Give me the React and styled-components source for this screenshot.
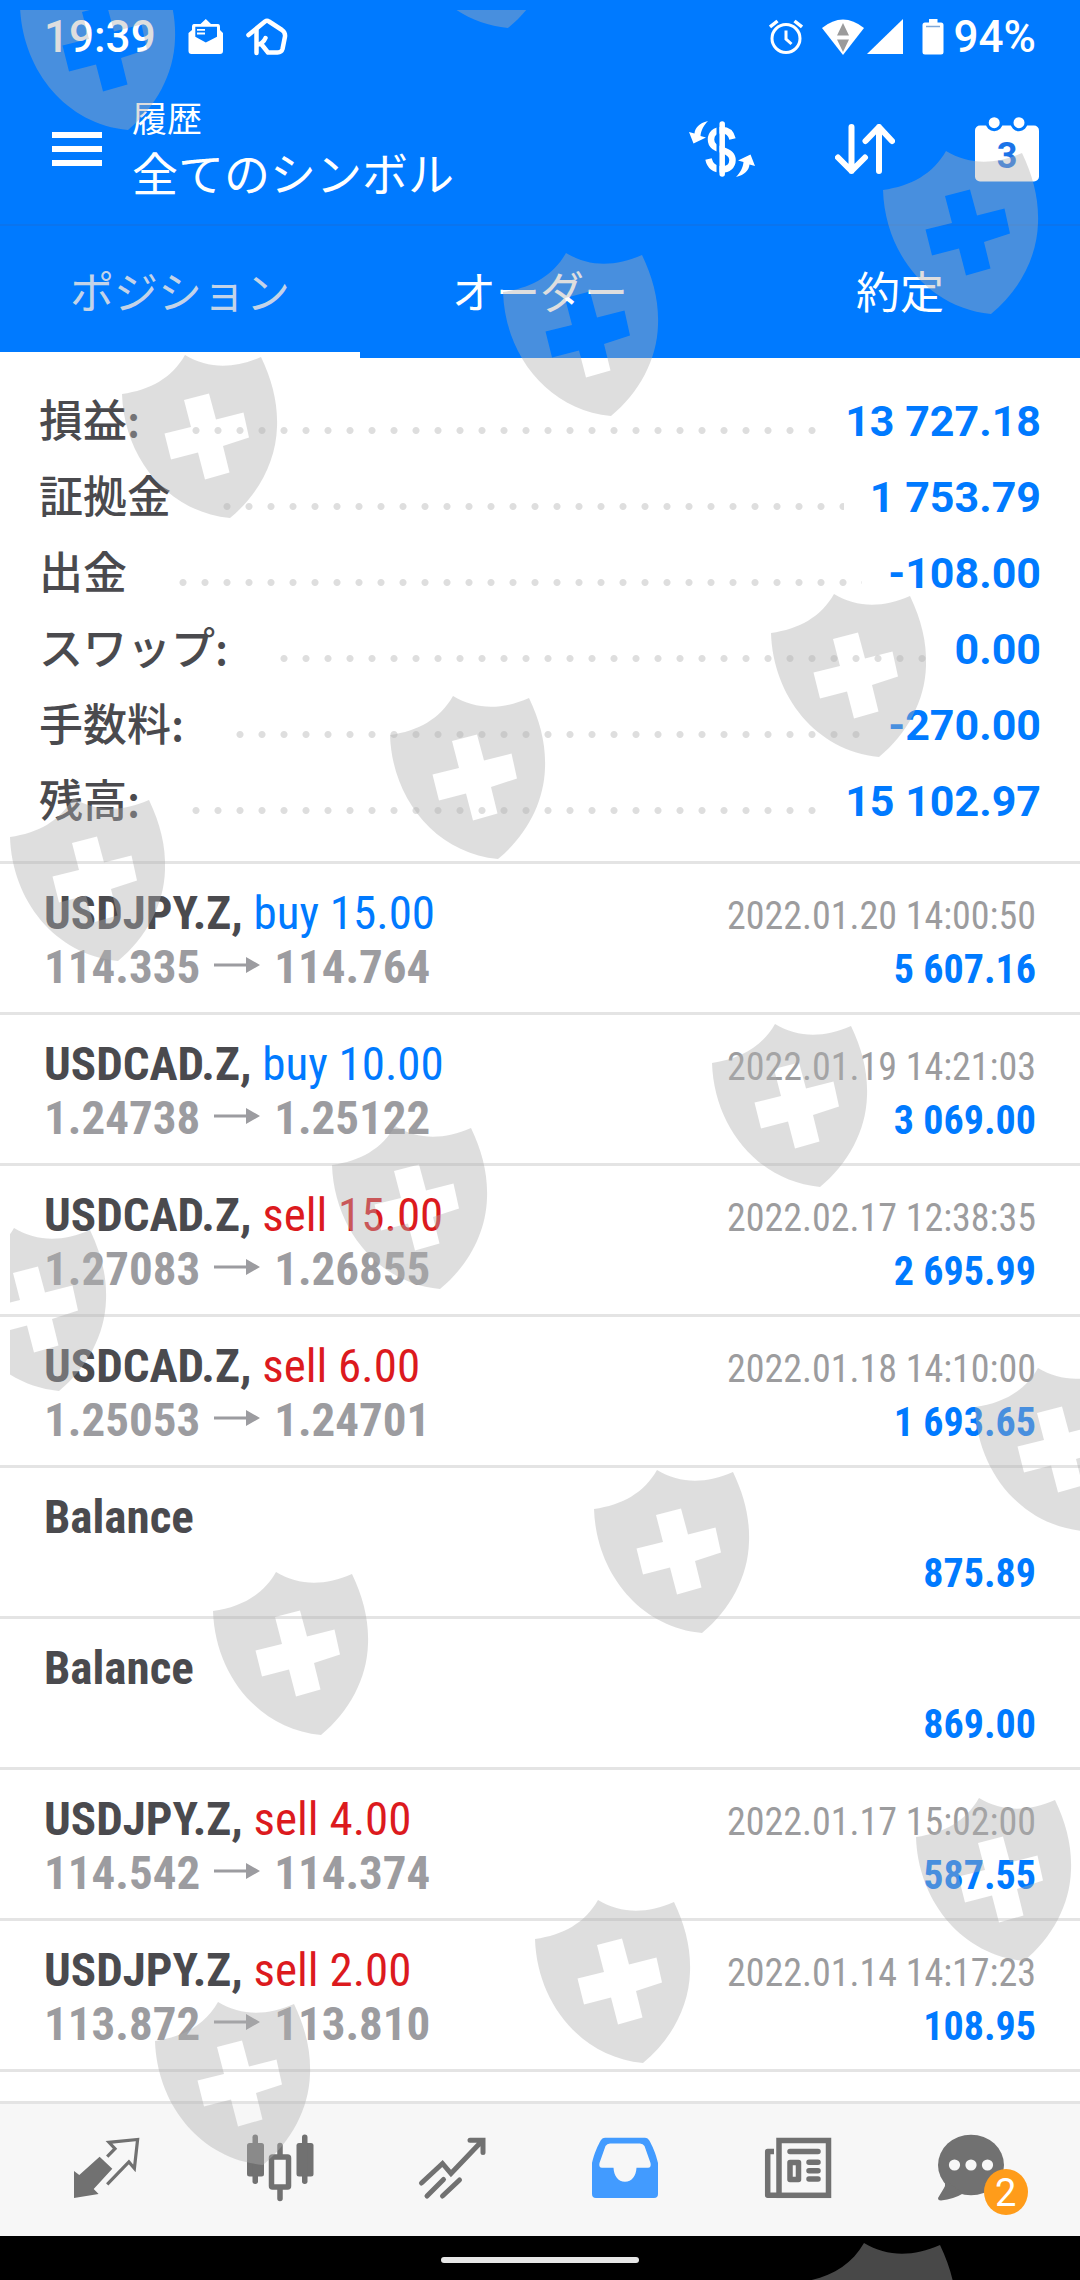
import React from "react";
import styled, { createGlobalStyle } from "styled-components";

const BLUE = "#007aff";
const JP = '"Noto Sans CJK JP", "Noto Sans", sans-serif';
const LATIN = 'Roboto, "Noto Sans CJK JP", sans-serif';
const NARROW = '"Roboto Condensed", Roboto, sans-serif';

const GlobalStyle = createGlobalStyle`
  * { box-sizing: border-box; }
  body { margin: 0; background: #fff; }
  button { border: 0; padding: 0; margin: 0; background: none; font: inherit; color: inherit; cursor: pointer; }
  svg { display: block; flex: none; }
`;

const Screen = styled.div`
  position: relative;
  display: flex;
  flex-direction: column;
  height: 100vh;
  overflow: hidden;
  font-family: ${LATIN};
  background: #fff;
`;

/* ---------- header ---------- */

const Header = styled.header`
  flex: none;
  background: ${BLUE};
  color: #fff;
`;

const StatusBar = styled.div`
  display: flex;
  align-items: center;
  justify-content: space-between;
  height: 74px;
  padding: 0 44px;
  font-size: 44px;
  font-weight: 500;
  line-height: 74px;
`;

const StatusGroup = styled.div`
  display: flex;
  align-items: center;
  gap: ${(p) => p.$gap}px;
`;

const Toolbar = styled.div`
  display: flex;
  align-items: center;
  height: 152px;
  padding: 0 41px 0 52px;
  border-bottom: 2px solid #0a74ee;
`;

const MenuButton = styled.button`
  display: flex;
  flex-direction: column;
  gap: 8px;
  width: 50px;
  margin-right: 30px;
`;

const MenuBar = styled.span`
  height: 6px;
  background: #fff;
`;

const Titles = styled.div`
  flex: 1;
  padding-bottom: 8px;
  font-family: ${JP};
`;

const Caption = styled.div`
  font-size: 35px;
  line-height: 52px;
`;

const Title = styled.h1`
  margin: 0;
  font-size: 46px;
  font-weight: 400;
  line-height: 56px;
`;

const Actions = styled.div`
  display: flex;
  align-items: center;
  gap: 80px;
`;

const Tabs = styled.div`
  display: flex;
  height: 132px;
`;

const Tab = styled.button`
  && {
    flex: 1;
    padding-top: 2px;
    border-bottom: 6px solid ${(p) => (p.$active ? "#fff" : BLUE)};
    font-family: ${JP};
    font-size: 44px;
    color: ${(p) => (p.$active ? "#c3d3e8" : "#fff")};
  }
`;

/* ---------- summary ---------- */

const Summary = styled.dl`
  flex: none;
  margin: 0;
  padding: 24px 39px 23px;
  border-bottom: 3px solid #e4e4e4;
`;

const SummaryRow = styled.div`
  display: flex;
  height: 76px;
  line-height: 78px;
  font-size: 44px;
`;

const SummaryLabel = styled.dt`
  font-family: ${JP};
  font-weight: 500;
  color: #4a4a4e;
  line-height: 72px;
`;

const Leader = styled.span`
  flex: 1;
  height: 7px;
  margin: 45px 26px 0 41px;
  background: radial-gradient(circle at 15px 50%, #dedede 3px, transparent 4px) 0 0 / 22px 7px repeat-x;
`;

const SummaryValue = styled.dd`
  margin: 0;
  font-size: 43px;
  font-weight: 700;
  color: ${BLUE};
`;

/* ---------- deals ---------- */

const DealList = styled.ul`
  flex: 1;
  min-height: 0;
  margin: 0;
  padding: 0;
  overflow: hidden;
  list-style: none;
  font-family: ${NARROW};
`;

const Deal = styled.li`
  height: 151px;
  padding: 22px 44px 0;
  border-bottom: 3px solid #e4e4e4;
`;

const Line = styled.div`
  display: flex;
  align-items: baseline;
  justify-content: space-between;
  height: 54px;
  font-size: 47px;
  line-height: 54px;
  white-space: pre;
`;

const Symbol = styled.span`
  font-weight: 700;
  color: #4a4a4e;
`;

const Side = styled.span`
  font-weight: 400;
  color: ${(p) => (p.$side === "sell" ? "#dc1a1e" : BLUE)};
`;

const Prices = styled.span`
  font-weight: 700;
  color: #9c9ca0;

  svg {
    display: inline-block;
    margin: 0 14px 9px;
  }
`;

const Time = styled.time`
  font-size: 38px;
  color: #9c9c9e;
`;

const Profit = styled.span`
  font-size: 40px;
  font-weight: 700;
  color: ${BLUE};
`;

/* ---------- bottom ---------- */

const BottomNav = styled.nav`
  display: flex;
  flex: none;
  height: 135px;
  padding: 0 23px 0 21px;
  border-top: 3px solid #e4e4e4;
  background: #f7f7f7;
`;

const NavButton = styled.button`
  && {
    display: flex;
    flex: 1;
    align-items: center;
    justify-content: center;
    color: ${(p) => (p.$active ? "#429bff" : "#717171")};
  }
`;

const BadgeAnchor = styled.span`
  position: relative;
`;

const Badge = styled.span`
  position: absolute;
  right: -17px;
  bottom: -5px;
  width: 44px;
  height: 46px;
  border-radius: 50%;
  background: #ff9c1a;
  color: #fff;
  font-size: 38px;
  line-height: 48px;
  text-align: center;
`;

const GestureBar = styled.div`
  display: flex;
  flex: none;
  justify-content: center;
  height: 44px;
  padding-top: 21px;
  background: #000;
`;

const GesturePill = styled.span`
  width: 198px;
  height: 6px;
  border-radius: 3px;
  background: #e6e6e6;
`;

/* ---------- shields laid over the page ---------- */

const ShieldLayer = styled.div`
  position: absolute;
  inset: 10px 0 0 10px;
  overflow: hidden;
  pointer-events: none;
`;

const Shield = styled.svg`
  position: absolute;
  left: ${(p) => p.$x - 10}px;
  top: ${(p) => p.$y - 10}px;
  fill: rgba(176, 176, 176, 0.41);
`;

const shields = [
  [20, -33], [400, -135],
  [122, 355], [503, 253], [883, 151],
  [10, 798], [390, 696], [771, 594],
  [-49, 1228], [332, 1126], [712, 1024],
  [213, 1572], [594, 1470], [975, 1368],
  [155, 2002], [535, 1900], [916, 1798],
  [801, 2243],
];

const summary = [
  ["損益:", "13 727.18"],
  ["証拠金", "1 753.79"],
  ["出金", "-108.00"],
  ["スワップ:", "0.00"],
  ["手数料:", "-270.00"],
  ["残高:", "15 102.97"],
];

const deals = [
  { symbol: "USDJPY.Z", side: "buy", volume: "15.00", open: "114.335", close: "114.764", time: "2022.01.20 14:00:50", profit: "5 607.16" },
  { symbol: "USDCAD.Z", side: "buy", volume: "10.00", open: "1.24738", close: "1.25122", time: "2022.01.19 14:21:03", profit: "3 069.00" },
  { symbol: "USDCAD.Z", side: "sell", volume: "15.00", open: "1.27083", close: "1.26855", time: "2022.02.17 12:38:35", profit: "2 695.99" },
  { symbol: "USDCAD.Z", side: "sell", volume: "6.00", open: "1.25053", close: "1.24701", time: "2022.01.18 14:10:00", profit: "1 693.65" },
  { symbol: "Balance", profit: "875.89" },
  { symbol: "Balance", profit: "869.00" },
  { symbol: "USDJPY.Z", side: "sell", volume: "4.00", open: "114.542", close: "114.374", time: "2022.01.17 15:02:00", profit: "587.55" },
  { symbol: "USDJPY.Z", side: "sell", volume: "2.00", open: "113.872", close: "113.810", time: "2022.01.14 14:17:23", profit: "108.95" },
  { symbol: "Balance", profit: "" },
];

/* ---------- drawings ---------- */

const MailIcon = () => (
  <svg width="36" height="36" viewBox="0 0 36 36">
    <path fill="#fff" d="M17.8 0 L23 5 H30 Q32 5 32 8 V11 L35 14 V32 Q35 35 32 35 H3.500 Q.5 35 .5 32 V14 L4 11 V8 Q4 5 6 5 H12.500Z" />
    <path fill={BLUE} d="M7.300 7.700H29V17.700L17.800 23.500L7.300 17.700Z" />
    <path stroke="#fff" strokeWidth="1.800" d="M9 10.800H17M9 14.500H17" />
  </svg>
);

const HouseIcon = () => (
  <svg width="42" height="38" viewBox="0 0 42 38" fill="none" stroke="#fff" strokeWidth="4.500" strokeLinecap="round" strokeLinejoin="round">
    <path d="M2.500 17L19 3.500Q21 2 23 3.500L36 12Q39.500 14.500 39 18.500L36.500 31Q35.500 34.500 31.500 34.500H22L16 27" />
    <path d="M10.500 12V35M10.500 27Q17 26 19.500 20" />
  </svg>
);

const AlarmIcon = () => (
  <svg width="34" height="36" viewBox="0 0 34 36" fill="none" stroke="#fff" strokeWidth="3">
    <circle cx="17" cy="19.500" r="14" />
    <path d="M1 8L8.500 2M33 8L25.500 2" strokeWidth="3.500" />
    <path d="M17 11.500V20L22.500 25" />
  </svg>
);

const WifiIcon = () => (
  <svg width="42" height="36" viewBox="0 0 42 36">
    <path fill="#fff" d="M0 9Q21 -8 42 9L21 36Z" />
    <path fill="#9b9b9b" d="M21 4L27 16.500H15ZM15 20.500H27L21 33Z" />
  </svg>
);

const SignalIcon = () => (
  <svg width="36" height="36" viewBox="0 0 36 36">
    <path fill="#fff" d="M36 0V35H0Z" />
  </svg>
);

const BatteryIcon = () => (
  <svg width="22" height="36" viewBox="0 0 22 36">
    <path fill="#fff" d="M7 0H15.500V3.500H19Q21.500 3.500 21.500 6V33Q21.500 35.500 19 35.500H3Q.5 35.500 .5 33V6Q.5 3.500 3 3.500H7Z" />
    <path stroke="#7fa8d8" strokeWidth="1.500" d="M4 7.500H18" />
  </svg>
);

const DollarIcon = () => (
  <svg width="66" height="56" viewBox="0 0 66 56">
    <path fill="none" stroke="#fff" strokeWidth="6.500" d="M43.500 18C42 12 38 9 33 9C26 9 22 13 22 18.500C22 25 27 27 33 29C40 31 43.500 34 43.500 39C43.500 45 39 48.500 33 48.500C25 48.500 21 45 19.500 38" />
    <path stroke={BLUE} strokeWidth="3" d="M29 2V54" />
    <path stroke="#fff" strokeWidth="5.500" strokeLinecap="round" d="M33.200 3V53" />
    <g fill="#fff">
      <path d="M19 0C10 2 6 7 5.500 12.500L0 11L4.500 22.500L17 16.500L11.500 15C12 9 15 4 19 0Z" />
      <path transform="rotate(180 33 28)" d="M19 0C10 2 6 7 5.500 12.500L0 11L4.500 22.500L17 16.500L11.500 15C12 9 15 4 19 0Z" />
    </g>
  </svg>
);

const SortIcon = () => (
  <svg width="60" height="50" viewBox="0 0 60 50" fill="none" stroke="#fff" strokeWidth="6" strokeLinecap="round" strokeLinejoin="round">
    <path d="M16.500 3V47M3 33.500L16.500 47L30 33.500" />
    <path d="M44 47V3M30.500 17L44 3L57 17" />
  </svg>
);

const CalendarIcon = () => (
  <svg width="64" height="65" viewBox="0 0 64 65">
    <rect y="8.500" width="64" height="56" rx="5" fill="#fff" />
    <g fill="#fff" stroke={BLUE} strokeWidth="3">
      <circle cx="19.200" cy="5.700" r="7" />
      <circle cx="44" cy="5.700" r="7" />
    </g>
    <text x="32" y="51" textAnchor="middle" fontFamily="Roboto, sans-serif" fontWeight="700" fontSize="36" fill="#1a73e8">3</text>
  </svg>
);

const ArrowIcon = () => (
  <svg width="46" height="18" viewBox="0 0 46 18">
    <path fill="#9c9ca0" d="M0 7.500H32V1L46 9L32 17V10.500H0Z" />
  </svg>
);

const NavIcon = ({ children }) => (
  <svg width="80" height="80" viewBox="0 0 80 80" fill="currentColor" stroke="none">{children}</svg>
);

const QuotesIcon = () => (
  <NavIcon>
    <path d="M7 41L12.300 45L32.600 26.700L45.300 38.700L26.700 59L31.600 64L7 68Z" />
    <path fill="none" stroke="currentColor" strokeWidth="3.200" d="M40.200 26.700L48 18.700L42 12.300L70.600 9.500L67.400 38.500L61.900 32L40.200 54.300" />
  </NavIcon>
);

const ChartIcon = () => (
  <NavIcon>
    <rect x="7" y="13" width="17" height="33.500" rx="2.500" />
    <rect x="12.500" y="4.500" width="5.500" height="49.500" rx="2.700" />
    <rect x="56.500" y="13" width="17" height="33.500" rx="2.500" />
    <rect x="62" y="4.500" width="5.500" height="49.500" rx="2.700" />
    <rect x="31.500" y="27" width="17" height="30" rx="1" fill="none" stroke="currentColor" strokeWidth="5.500" />
    <path fill="none" stroke="currentColor" strokeWidth="5.500" strokeLinecap="round" d="M40 15.500V26M40 58V68.500" />
  </NavIcon>
);

const TradeIcon = () => (
  <NavIcon>
    <path fill="none" stroke="currentColor" strokeWidth="5" strokeLinecap="round" d="M8.500 53L29.500 33.500L38 43.500L69 11M57 10.200H70V22.500M30.500 49.500L14 66M46.500 50L29.500 66" />
  </NavIcon>
);

const HistoryIcon = () => (
  <NavIcon>
    <path fillRule="evenodd" d="M7 33C9 24 13 15 16 10Q17.500 7.700 20 7.700H60Q62.500 7.700 64 10C67 15 71 24 73 33V64Q73 68 69 68H11Q7 68 7 64ZM25 13.500Q22 13.500 20.500 16L14.500 33Q13.500 37.700 17 37.700H28.500C29 46 33 51.700 40 51.700C47 51.700 51 46 51.500 37.700H63Q66.500 37.700 65.500 33L59.500 16Q58 13.500 55 13.500Z" />
  </NavIcon>
);

const NewsIcon = () => (
  <NavIcon>
    <g fill="none" stroke="currentColor" strokeWidth="5.500">
      <rect x="21" y="10.500" width="49.500" height="54.800" />
      <path strokeLinejoin="round" d="M16 21.500H9.700V65.300H21" />
      <path strokeLinecap="round" d="M32 21.500H60M51 32.300H60M51 40.700H60M51 49H60" />
      <rect x="32" y="32.500" width="8.500" height="17" strokeLinejoin="round" />
    </g>
  </NavIcon>
);

const ChatIcon = () => (
  <NavIcon>
    <ellipse cx="40" cy="35" rx="33" ry="30.300" />
    <path d="M11 48Q16 53 13 58L7 68Q7 70.500 10 70.500Q23 69 32 63.500Z" />
    <g fill="#f7f7f7">
      <circle cx="23.500" cy="35" r="5.600" />
      <circle cx="40" cy="35" r="5.600" />
      <circle cx="56.500" cy="35" r="5.600" />
    </g>
  </NavIcon>
);

export default function App() {
  return (
    <Screen>
      <GlobalStyle />
      <Header>
        <StatusBar>
          <StatusGroup $gap={32}>
            <span>19:39</span>
            <StatusGroup $gap={22}>
              <MailIcon />
              <HouseIcon />
            </StatusGroup>
          </StatusGroup>
          <StatusGroup $gap={19}>
            <AlarmIcon />
            <StatusGroup $gap={3}>
              <WifiIcon />
              <SignalIcon />
            </StatusGroup>
            <StatusGroup $gap={10}>
              <BatteryIcon />
              <span>94%</span>
            </StatusGroup>
          </StatusGroup>
        </StatusBar>
        <Toolbar>
          <MenuButton aria-label="メニュー">
            <MenuBar />
            <MenuBar />
            <MenuBar />
          </MenuButton>
          <Titles>
            <Caption>履歴</Caption>
            <Title>全てのシンボル</Title>
          </Titles>
          <Actions>
            <button aria-label="通貨"><DollarIcon /></button>
            <button aria-label="並べ替え"><SortIcon /></button>
            <button aria-label="期間"><CalendarIcon /></button>
          </Actions>
        </Toolbar>
        <Tabs role="tablist">
          <Tab role="tab" aria-selected="true" $active>ポジション</Tab>
          <Tab role="tab" aria-selected="false">オーダー</Tab>
          <Tab role="tab" aria-selected="false">約定</Tab>
        </Tabs>
      </Header>

      <Summary>
        {summary.map(([label, value]) => (
          <SummaryRow key={label}>
            <SummaryLabel>{label}</SummaryLabel>
            <Leader />
            <SummaryValue>{value}</SummaryValue>
          </SummaryRow>
        ))}
      </Summary>

      <DealList>
        {deals.map((d, i) => (
          <Deal key={i}>
            <Line>
              <span>
                <Symbol>{d.side ? `${d.symbol}, ` : d.symbol}</Symbol>
                {d.side && <Side $side={d.side}>{`${d.side} ${d.volume}`}</Side>}
              </span>
              {d.time && <Time>{d.time}</Time>}
            </Line>
            <Line>
              <Prices>
                {d.open ? <>{d.open}<ArrowIcon />{d.close}</> : "\u00a0"}
              </Prices>
              <Profit>{d.profit}</Profit>
            </Line>
          </Deal>
        ))}
      </DealList>

      <BottomNav>
        <NavButton aria-label="気配値"><QuotesIcon /></NavButton>
        <NavButton aria-label="チャート"><ChartIcon /></NavButton>
        <NavButton aria-label="トレード"><TradeIcon /></NavButton>
        <NavButton aria-label="履歴" $active><HistoryIcon /></NavButton>
        <NavButton aria-label="ニュース"><NewsIcon /></NavButton>
        <NavButton aria-label="メッセージ">
          <BadgeAnchor>
            <ChatIcon />
            <Badge>2</Badge>
          </BadgeAnchor>
        </NavButton>
      </BottomNav>
      <GestureBar><GesturePill /></GestureBar>

      <ShieldLayer aria-hidden="true">
        {shields.map(([x, y]) => (
          <Shield key={`${x},${y}`} $x={x} $y={y} width="156" height="164" viewBox="0 0 156 164">
            <path
              fillRule="evenodd"
              d="M0 39C28 35 50 23 63 0C86 14 112 14 139 2C150 25 156 48 155 72C154 107 136 140 108 163C45 157 2 102 0 39ZM62 45L87 38.500L94 64.500L121.500 57.500L127 82.500L101 91L107.500 117.500L83 124.500L76 97.500L49 104.500L42.500 78.500L69 72Z"
            />
          </Shield>
        ))}
      </ShieldLayer>
    </Screen>
  );
}
